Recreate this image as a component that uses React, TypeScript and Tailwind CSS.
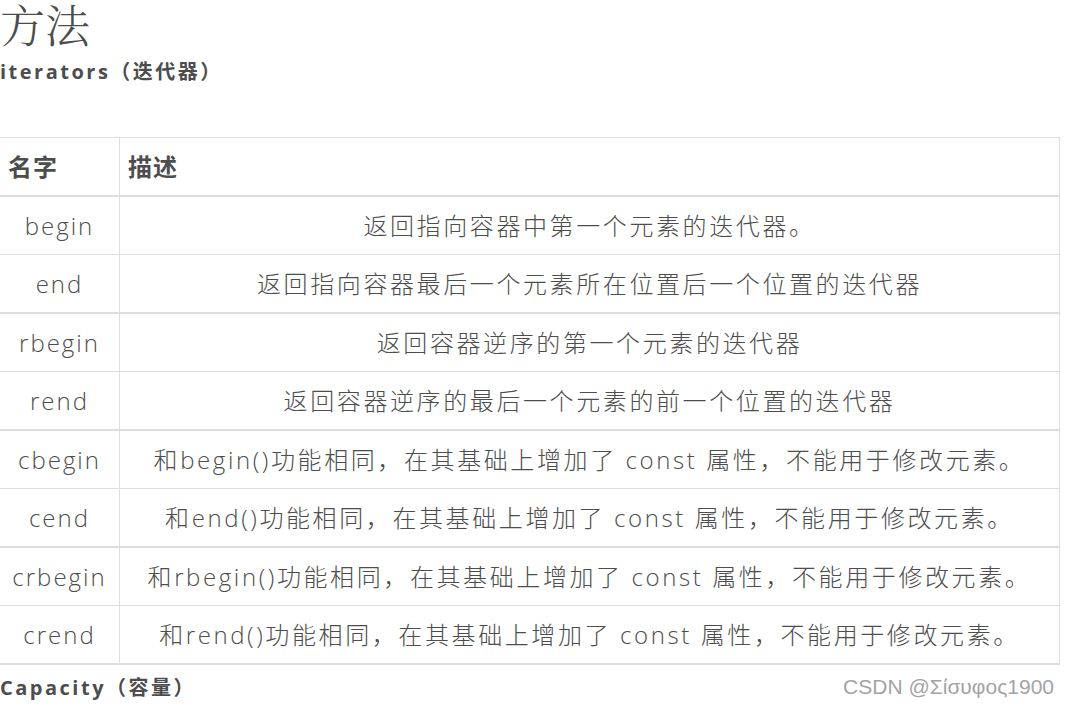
const FONT = "font-['Open_Sans','Noto_Sans_CJK_SC',sans-serif]";

const ROWS = [
  { name: "begin", desc: "返回指向容器中第一个元素的迭代器。" },
  { name: "end", desc: "返回指向容器最后一个元素所在位置后一个位置的迭代器" },
  { name: "rbegin", desc: "返回容器逆序的第一个元素的迭代器" },
  { name: "rend", desc: "返回容器逆序的最后一个元素的前一个位置的迭代器" },
  { name: "cbegin", desc: "和begin()功能相同，在其基础上增加了 const 属性，不能用于修改元素。" },
  { name: "cend", desc: "和end()功能相同，在其基础上增加了 const 属性，不能用于修改元素。" },
  { name: "crbegin", desc: "和rbegin()功能相同，在其基础上增加了 const 属性，不能用于修改元素。" },
  { name: "crend", desc: "和rend()功能相同，在其基础上增加了 const 属性，不能用于修改元素。" },
];

export default function App() {
  return (
    <div className={`relative w-[1069px] h-[709px] overflow-hidden bg-white text-[#4d4d4d] ${FONT}`}>
      {/* 标题 */}
      <div className="h-[48px] text-[45px] leading-[48px] font-light font-['Noto_Serif_CJK_SC','Noto_Sans_CJK_SC',serif]">
        方法
      </div>
      <div className="h-[48px] text-[20px] leading-[48px] font-bold tracking-[2.5px]">
        iterators（迭代器）
      </div>

      {/* 表格 */}
      <div className="mt-[41px] w-[1060px] border-t border-r border-[#dddddd]">
        <div className="grid grid-cols-[120px_1fr] h-[59px] border-b-2 border-[#dddddd] text-[24px] font-bold tracking-[1px]">
          <div className="flex items-center pl-2 border-r border-[#dddddd]">名字</div>
          <div className="flex items-center pl-2">描述</div>
        </div>
        {ROWS.map((row, i) => (
          <div
            key={row.name}
            className={
              i % 2 === 0
                ? "grid grid-cols-[120px_1fr] h-[58px] border-b border-[#dddddd] text-[24px] font-light"
                : "grid grid-cols-[120px_1fr] h-[59px] border-b-2 border-[#dddddd] text-[24px] font-light"
            }
          >
            <div className="flex items-center justify-center border-r border-[#dddddd] tracking-[2px]">{row.name}</div>
            <div className="flex items-center justify-center whitespace-nowrap tracking-[2.6px]">{row.desc}</div>
          </div>
        ))}
      </div>

      <div className="h-[46px] text-[20px] leading-[46px] font-bold tracking-[2.5px]">
        Capacity（容量）
      </div>

      {/* 水印 */}
      <div className="absolute right-[15px] top-[675px] text-[21px] leading-[24px] text-[#a3a3a3] font-['Liberation_Sans',sans-serif]">
        CSDN @Σίσυφος1900
      </div>
    </div>
  );
}
